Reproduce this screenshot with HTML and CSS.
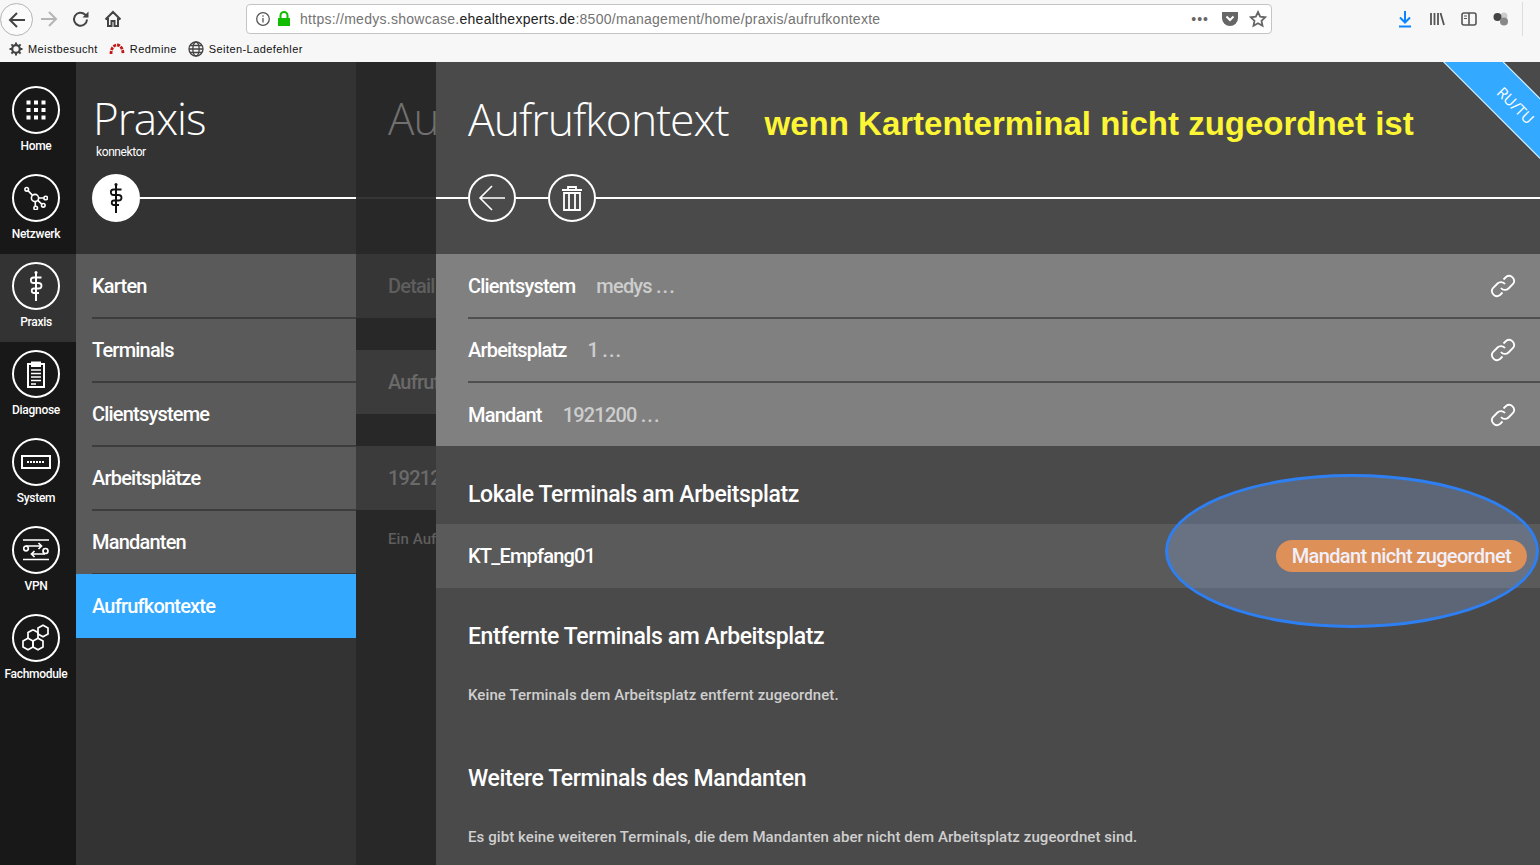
FILE: index.html
```html
<!DOCTYPE html>
<html lang="de">
<head>
    <meta charset="UTF-8">
    <title>Aufrufkontext</title>
    <link rel="stylesheet" href="styles.css">
</head>
<body>
    <div class="browser">
        <div class="toolbar">
            <div class="tool-back">
                <svg width="20" height="20" viewBox="0 0 20 20" fill="none" stroke="#444" stroke-width="2"><path d="M18 10H3M10 3l-7 7 7 7"/></svg>
            </div>
            <svg class="tool-icon tool-forward" width="20" height="20" viewBox="0 0 20 20" fill="none" stroke="#b5b5b5" stroke-width="2"><path d="M2 10h15M10 3l7 7-7 7"/></svg>
            <svg class="tool-icon" width="20" height="20" viewBox="0 0 20 20" fill="none" stroke="#444" stroke-width="2"><path d="M16 10.500a6.500 6.500 0 1 1-2-5l2.200 2.200"/><path d="M17.500 2.500v6h-6z" fill="#444" stroke="none"/></svg>
            <svg class="tool-icon" width="20" height="20" viewBox="0 0 20 20" fill="none" stroke="#444" stroke-width="2"><path d="M2.500 10.500L10 3l7.500 7.500M5 9v8h3.500v-5h3v5H15V9"/></svg>
            <div class="urlbar">
                <svg width="16" height="16" viewBox="0 0 16 16" fill="none" stroke="#555" stroke-width="1.300"><circle cx="8" cy="8" r="6.300"/><path d="M8 7v4.500M8 4.300v1.500"/></svg>
                <svg class="lock" width="14" height="16" viewBox="0 0 14 16"><path d="M1 7h12v8H1z" fill="#12bc00"/><path d="M3.500 7V4.500a3.500 3.500 0 0 1 7 0V7" fill="none" stroke="#12bc00" stroke-width="2"/></svg>
                <span class="url">https://medys.showcase.<b>ehealthexperts.de</b>:8500/management/home/praxis/aufrufkontexte</span>
                <span class="url-dots">•••</span>
                <svg class="url-icon" width="18" height="16" viewBox="0 0 18 16"><path d="M1 1h16v6a8 8 0 0 1-16 0z" fill="#666"/><path d="M5.500 5.500L9 9l3.500-3.500" fill="none" stroke="#fff" stroke-width="2"/></svg>
                <svg class="url-icon" width="18" height="18" viewBox="0 0 18 18"><path d="M9 2l2.200 4.700 5 .6-3.700 3.500 1 5L9 13.300 4.500 15.800l1-5L1.800 7.300l5-.6z" fill="none" stroke="#666" stroke-width="1.800"/></svg>
            </div>
            <div class="tool-right">
                <svg width="16" height="18" viewBox="0 0 16 18" fill="none" stroke="#0a84ff" stroke-width="2"><path d="M8 1v11M3 7.500l5 5 5-5M2 16.500h12"/></svg>
                <svg width="16" height="16" viewBox="0 0 16 16" fill="none" stroke="#555" stroke-width="1.800"><path d="M2 2v12M5.500 2v12M9 2v12M11.500 2l3.500 12"/></svg>
                <svg width="16" height="14" viewBox="0 0 16 14" fill="none" stroke="#555" stroke-width="1.600"><rect x="1" y="1" width="14" height="12" rx="2"/><path d="M8 1v12"/><path d="M3 4h3M3 6.500h3" stroke-width="1"/></svg>
                <svg width="16" height="14" viewBox="0 0 16 14"><circle cx="11" cy="4" r="3.500" fill="#ccc"/><circle cx="4.500" cy="5" r="4" fill="#444"/><circle cx="11" cy="9.500" r="4" fill="#888"/></svg>
                <span class="tool-sep"></span>
                <svg width="12" height="14" viewBox="0 0 12 14" fill="none" stroke="#555" stroke-width="1.800"><path d="M6 2h12M6 7h12M6 12h12"/></svg>
            </div>
        </div>
        <div class="bookmarks">
            <span class="bookmark">
                <svg width="14" height="14" viewBox="0 0 14 14"><circle cx="7" cy="7" r="3.800" fill="none" stroke="#444" stroke-width="2.200"/><path d="M7 .5v3M7 10.500v3M.5 7h3M10.500 7h3M2.400 2.400l2 2M9.600 9.600l2 2M11.600 2.400l-2 2M4.400 9.600l-2 2" stroke="#444" stroke-width="2"/></svg>
                Meistbesucht
            </span>
            <span class="bookmark">
                <svg width="16" height="12" viewBox="0 0 16 12" fill="none" stroke="#c41818" stroke-width="2.800" stroke-dasharray="3 1"><path d="M2 11C2 5 5 2 8 2s6 3 6 9"/></svg>
                Redmine
            </span>
            <span class="bookmark">
                <svg width="16" height="16" viewBox="0 0 16 16" fill="none" stroke="#444" stroke-width="1.300"><circle cx="8" cy="8" r="7"/><ellipse cx="8" cy="8" rx="3.200" ry="7"/><path d="M1 8h14M2 4.500h12M2 11.500h12"/></svg>
                Seiten-Ladefehler
            </span>
        </div>
    </div>

    <div class="app">
        <nav class="mainnav">
            <a class="nav-item">
                <span class="nav-circle">
                    <svg width="20" height="20" viewBox="0 0 20 20" fill="#fff"><rect x="0.500" y="0.500" width="4" height="4"/><rect x="8" y="0.500" width="4" height="4"/><rect x="15.500" y="0.500" width="4" height="4"/><rect x="0.500" y="8" width="4" height="4"/><rect x="8" y="8" width="4" height="4"/><rect x="15.500" y="8" width="4" height="4"/><rect x="0.500" y="15.500" width="4" height="4"/><rect x="8" y="15.500" width="4" height="4"/><rect x="15.500" y="15.500" width="4" height="4"/></svg>
                </span>
                Home
            </a>
            <a class="nav-item">
                <span class="nav-circle">
                    <svg width="24" height="24" viewBox="0 0 24 24" fill="none" stroke="#fff" stroke-width="1.600"><circle cx="11" cy="12" r="3.600"/><circle cx="2.700" cy="3.300" r="1.800"/><circle cx="21.700" cy="12" r="1.800"/><circle cx="19.300" cy="19.300" r="1.800"/><circle cx="11.700" cy="22" r="1.800"/><path d="M4 4.600l4.500 4.800M14.600 12h5.300M13.800 14.300l4 3.800M11.300 15.600v4.600"/></svg>
                </span>
                Netzwerk
            </a>
            <a class="nav-item active">
                <span class="nav-circle">
                    <svg width="18" height="30" viewBox="0 0 18 30" fill="none" stroke="#fff" stroke-width="1.800"><use href="#rod"/></svg>
                </span>
                Praxis
            </a>
            <a class="nav-item">
                <span class="nav-circle">
                    <svg width="20" height="28" viewBox="0 0 20 28" fill="none" stroke="#fff" stroke-width="2"><path d="M6 4H2v23h16V4h-4"/><path d="M6 2.500h8V6H6z" fill="#fff"/><path d="M5 10h10M5 13.500h10M5 17h10M5 20.500h10M5 24h5" stroke-width="1.600"/></svg>
                </span>
                Diagnose
            </a>
            <a class="nav-item">
                <span class="nav-circle">
                    <svg width="30" height="14" viewBox="0 0 30 14" fill="none" stroke="#fff" stroke-width="2"><path d="M1 1h28v12H1z"/><path d="M6 7h18" stroke-width="2" stroke-dasharray="2 1"/></svg>
                </span>
                System
            </a>
            <a class="nav-item">
                <span class="nav-circle">
                    <svg width="26" height="22" viewBox="0 0 26 22" fill="none" stroke="#fff" stroke-width="1.700"><path d="M0 1h26M0 20.500h26"/><circle cx="3" cy="9.500" r="2.300"/><circle cx="22.500" cy="12" r="2.500"/><path d="M3 7h15.500M15.500 4l3 3-3 3M22 15H8.500M11.500 12l-3 3 3 3"/></svg>
                </span>
                VPN
            </a>
            <a class="nav-item">
                <span class="nav-circle">
                    <svg width="28" height="28" viewBox="0 0 28 28" fill="none" stroke="#fff" stroke-width="1.700"><path d="M6 14.200l5 2.900v5.800l-5 2.900-5-2.900v-5.800z"/><path d="M16 14.200l5 2.900v5.800l-5 2.900-5-2.900v-5.800z"/><path d="M11 5.700l5 2.900v5.800"/><path d="M11 5.700l-5 2.900v5.800"/><path d="M21 1.200l5 2.900v5.800l-5 2.900-5-2.900V4.100z"/></svg>
                </span>
                Fachmodule
            </a>
        </nav>

        <aside class="sidebar">
            <div class="panel-head">
                <h1 class="panel-title">Praxis</h1>
                <p class="panel-sub">konnektor</p>
                <div class="action-row action-row-side">
                    <span class="circle-btn circle-btn-solid">
                        <svg width="18" height="30" viewBox="0 0 18 30" fill="none" stroke="#111" stroke-width="1.800"><use href="#rod"/></svg>
                    </span>
                    <span class="rule"></span>
                </div>
            </div>
            <ul class="side-list">
                <li class="side-item">Karten</li>
                <li class="side-item">Terminals</li>
                <li class="side-item">Clientsysteme</li>
                <li class="side-item">Arbeitsplätze</li>
                <li class="side-item">Mandanten</li>
                <li class="side-item selected">Aufrufkontexte</li>
            </ul>
        </aside>

        <section class="behind">
            <div class="behind-head">
                <div class="behind-title">Au</div>
                <span class="behind-rule"></span>
            </div>
            <div class="behind-row">Detail</div>
            <div class="behind-row behind-row-b">Aufruf</div>
            <div class="behind-row behind-row-c">19212</div>
            <div class="behind-note">Ein Auf</div>
        </section>

        <main class="content">
            <div class="content-head">
                <div class="title-row">
                    <h1 class="content-title">Aufrufkontext</h1>
                    <span class="note">wenn Kartenterminal nicht zugeordnet ist</span>
                </div>
                <div class="action-row">
                    <span class="rule rule-lead"></span>
                    <span class="circle-btn">
                        <svg width="28" height="28" viewBox="0 0 28 28" fill="none" stroke="#fff" stroke-width="1.600"><path d="M27 14H2M14 2L2 14l12 12"/></svg>
                    </span>
                    <span class="rule rule-short"></span>
                    <span class="circle-btn">
                        <svg width="22" height="26" viewBox="0 0 22 26" fill="none" stroke="#fff" stroke-width="1.800"><path d="M1 5h20M7 5V2h8v3M3 8h16v17H3zM8 8v17M14 8v17"/></svg>
                    </span>
                    <span class="rule"></span>
                </div>
            </div>

            <ul class="link-list">
                <li class="link-item">
                    <span class="link-label">Clientsystem</span><span class="link-value">medys <span class="dots">...</span></span>
                    <svg class="link-icon" width="26" height="26" viewBox="0 0 26 26" fill="none" stroke="#fff" stroke-width="1.800"><use href="#chain"/></svg>
                </li>
                <li class="link-item">
                    <span class="link-label">Arbeitsplatz</span><span class="link-value">1 <span class="dots">...</span></span>
                    <svg class="link-icon" width="26" height="26" viewBox="0 0 26 26" fill="none" stroke="#fff" stroke-width="1.800"><use href="#chain"/></svg>
                </li>
                <li class="link-item">
                    <span class="link-label">Mandant</span><span class="link-value">1921200 <span class="dots">...</span></span>
                    <svg class="link-icon" width="26" height="26" viewBox="0 0 26 26" fill="none" stroke="#fff" stroke-width="1.800"><use href="#chain"/></svg>
                </li>
            </ul>

            <h2 class="group-title">Lokale Terminals am Arbeitsplatz</h2>
            <div class="terminal-row">
                <span>KT_Empfang01</span>
                <span class="badge">Mandant nicht zugeordnet</span>
            </div>

            <h2 class="group-title">Entfernte Terminals am Arbeitsplatz</h2>
            <p class="group-text">Keine Terminals dem Arbeitsplatz entfernt zugeordnet.</p>

            <h2 class="group-title">Weitere Terminals des Mandanten</h2>
            <p class="group-text">Es gibt keine weiteren Terminals, die dem Mandanten aber nicht dem Arbeitsplatz zugeordnet sind.</p>

            <div class="ribbon"><span>RU/TU</span></div>
            <div class="marker"></div>
        </main>
    </div>

    <svg class="defs" width="0" height="0">
        <defs>
            <g id="rod">
                <path d="M9 1v29" stroke-width="2"/>
                <circle cx="9" cy="1.500" r="1.500" fill="currentColor" stroke="none"/>
                <path d="M14.500 6.500H6.500C3 6.500 3 12 6.500 12H11.500C15.500 12 15.500 17.500 11.500 17.500H7C4 17.500 4 22 7 22H12"/>
            </g>
            <g id="chain">
                <path d="M11 15a5 5 0 0 0 7.500.5l4.500-4.500a5 5 0 0 0-7-7l-2.500 2.500"/>
                <path d="M15 11a5 5 0 0 0-7.500-.5L3 15a5 5 0 0 0 7 7l2.500-2.500"/>
            </g>
        </defs>
    </svg>
</body>
</html>
```

FILE: styles.css
```css
*{
    box-sizing: border-box;
}
html, body{
    height: 100%;
}
body{
    margin: 0;
    overflow: hidden;
    font-family: Roboto, sans-serif;
    color: #fff;
    background: #4a4a4a;
    display: flex;
    flex-direction: column;
}
ul{
    list-style: none;
    margin: 0;
    padding: 0;
}
h1, h2, p{
    margin: 0;
}
.defs{
    position: absolute;
}

/* browser chrome */
.browser{
    height: 62px;
    flex: none;
    background: #f7f7f7;
    color: #222;
    font-family: "Liberation Sans", sans-serif;
}
.toolbar{
    height: 38px;
    display: flex;
    align-items: center;
}
.tool-back{
    width: 33px;
    height: 33px;
    margin-top: 1px;
    border: 1px solid #b4b4b4;
    border-radius: 50%;
    background: #fbfbfb;
    display: flex;
    align-items: center;
    justify-content: center;
    flex: none;
}
.tool-icon{
    margin-left: 12px;
    flex: none;
}
.tool-forward{
    margin-left: 6px;
}
.urlbar{
    margin-left: 123px;
    width: 1026px;
    height: 30px;
    background: #fff;
    border: 1px solid #c4c4c4;
    border-radius: 4px;
    display: flex;
    align-items: center;
    padding-left: 8px;
    gap: 6px;
    flex: none;
}
.url{
    flex: 1;
    margin-left: 3px;
    font-size: 14px;
    letter-spacing: 0.27px;
    color: #737373;
    white-space: nowrap;
}
.url b{
    font-weight: normal;
    color: #222;
}
.url-dots{
    font-size: 14px;
    letter-spacing: 1px;
    color: #666;
    margin-right: 6px;
}
.url-icon{
    margin-right: 4px;
}
.tool-right{
    display: flex;
    align-items: center;
    gap: 16px;
    margin-left: 125px;
    flex: none;
}
.tool-sep{
    width: 1px;
    height: 34px;
    background: #ddd;
    margin-left: -3px;
    margin-right: -3px;
}
.bookmarks{
    height: 24px;
    padding: 0 0 2px 9px;
    display: flex;
    align-items: center;
    gap: 11px;
    font-size: 11px;
    letter-spacing: 0.42px;
    color: #111;
}
.bookmark{
    display: flex;
    align-items: center;
    gap: 5px;
}

/* app */
.app{
    flex: 1;
    display: flex;
    min-height: 0;
}
.mainnav{
    width: 76px;
    flex: none;
    background: #181818;
    padding-top: 16px;
}
.nav-item{
    height: 88px;
    display: flex;
    flex-direction: column;
    align-items: center;
    padding: 8px 4px 0 0;
    font-size: 12px;
    font-weight: 500;
    letter-spacing: -0.3px;
    line-height: 16px;
}
.nav-circle{
    width: 48px;
    height: 48px;
    border: 2px solid #fff;
    border-radius: 50%;
    display: flex;
    align-items: center;
    justify-content: center;
    margin-bottom: 4px;
}
.nav-item.active{
    background: #333;
}
.sidebar{
    width: 280px;
    flex: none;
    background: #333;
}
.panel-head{
    height: 192px;
    padding-top: 27px;
}
.panel-title{
    font-family: "Open Sans", sans-serif;
    font-weight: 300;
    font-size: 44px;
    line-height: 58px;
    letter-spacing: -1px;
    padding-left: 17px;
}
.panel-sub{
    font-size: 12px;
    line-height: 16px;
    letter-spacing: -0.4px;
    padding-left: 20px;
    margin-top: -3px;
}
.action-row{
    display: flex;
    align-items: center;
    height: 48px;
}
.action-row-side{
    margin-top: 14px;
    padding-left: 16px;
}
.rule{
    flex: 1;
    height: 2px;
    background: #fff;
}
.rule-lead{
    flex: none;
    width: 32px;
}
.rule-short{
    flex: none;
    width: 32px;
}
.circle-btn{
    width: 48px;
    height: 48px;
    flex: none;
    border: 2px solid #fff;
    border-radius: 50%;
    display: flex;
    align-items: center;
    justify-content: center;
}
.circle-btn-solid{
    background: #fff;
    color: #111;
}
.side-list{
    background: #5a5a5a;
    padding-top: 1px;
}
.side-item{
    height: 64px;
    margin-left: 16px;
    border-bottom: 2px solid #3d3d3d;
    display: flex;
    align-items: center;
    font-size: 20px;
    font-weight: 500;
    letter-spacing: -0.8px;
}
.side-item.selected{
    margin: -1px 0 0;
    padding-left: 16px;
    background: #33a9ff;
    border-bottom: 0;
}

/* panel lying behind the open detail */
.behind{
    width: 80px;
    flex: none;
    background: #282828;
    color: #707070;
    overflow: hidden;
    white-space: nowrap;
}
.behind-head{
    height: 192px;
    position: relative;
}
.behind-title{
    font-family: "Open Sans", sans-serif;
    font-weight: 300;
    font-size: 44px;
    line-height: 58px;
    padding: 27px 0 0 32px;
    letter-spacing: -1px;
}
.behind-rule{
    position: absolute;
    left: 0;
    right: 0;
    top: 135px;
    height: 2px;
    background: #363636;
}
.behind-row{
    height: 64px;
    display: flex;
    align-items: center;
    padding-left: 32px;
    background: #363636;
    font-size: 20px;
    font-weight: 500;
    letter-spacing: -0.8px;
    color: #5e5e5e;
}
.behind-row-b, .behind-row-c{
    margin-top: 32px;
    background: #3b3b3b;
    color: #6a6a6a;
}
.behind-note{
    padding: 20px 0 0 32px;
    font-size: 15px;
    font-weight: 500;
    letter-spacing: 0.08px;
    color: #5e5e5e;
}

/* open detail */
.content{
    flex: 1;
    min-width: 0;
    background: #4a4a4a;
    position: relative;
    overflow: hidden;
}
.content-head{
    height: 192px;
    padding-top: 27px;
}
.title-row{
    display: flex;
    align-items: center;
    height: 58px;
    padding-left: 32px;
    margin-bottom: 27px;
}
.content-title{
    font-family: "Open Sans", sans-serif;
    font-weight: 300;
    font-size: 44.500px;
    letter-spacing: -1px;
    margin-right: 36px;
}
.note{
    font-family: "Liberation Sans", sans-serif;
    font-weight: bold;
    font-size: 33px;
    margin-top: 12px;
    color: #fdf635;
}
.link-list{
    background: #808080;
    padding-top: 1px;
}
.link-item{
    height: 64px;
    margin-left: 32px;
    padding-right: 24px;
    border-bottom: 2px solid #4f4f4f;
    display: flex;
    align-items: center;
    font-size: 20px;
    font-weight: 500;
    letter-spacing: -0.8px;
}
.link-item:last-child{
    height: 63px;
    border-bottom: 0;
}
.link-value{
    margin-left: 21px;
    color: #cdcdcd;
}
.dots{
    letter-spacing: 1px;
}
.link-icon{
    margin-left: auto;
}
.group-title{
    height: 78px;
    padding: 31px 0 0 32px;
    font-size: 23px;
    line-height: 36px;
    font-weight: 500;
    letter-spacing: -0.4px;
}
.terminal-row{
    height: 64px;
    background: #5a5a5a;
    display: flex;
    align-items: center;
    justify-content: space-between;
    padding: 0 13px 0 32px;
    font-size: 20px;
    font-weight: 500;
    letter-spacing: -0.8px;
}
.badge{
    height: 32px;
    padding: 0 16px;
    border-radius: 16px;
    background: #dd9058;
    display: flex;
    align-items: center;
    color: #f1effa;
    letter-spacing: -0.65px;
    position: relative;
    z-index: 1;
}
.group-text{
    height: 64px;
    padding: 17px 0 0 32px;
    font-size: 15px;
    line-height: 24px;
    font-weight: 500;
    letter-spacing: 0.08px;
    color: #cfcfcf;
}
.ribbon{
    position: absolute;
    top: 12px;
    right: -67px;
    width: 200px;
    height: 43px;
    transform: rotate(45deg);
    background: #33a9ff;
    border-top: 1px solid #e8f4ff;
    border-bottom: 1px solid #e8f4ff;
    display: flex;
    align-items: center;
    justify-content: center;
    font-family: "Open Sans", sans-serif;
    font-size: 15px;
}
.ribbon span{
    margin-left: 26px;
}
.marker{
    position: absolute;
    left: 729px;
    top: 412px;
    width: 374px;
    height: 154px;
    border: 3px solid #2d7ff2;
    border-radius: 50%;
    background: rgba(150, 186, 250, 0.25);
}
```
